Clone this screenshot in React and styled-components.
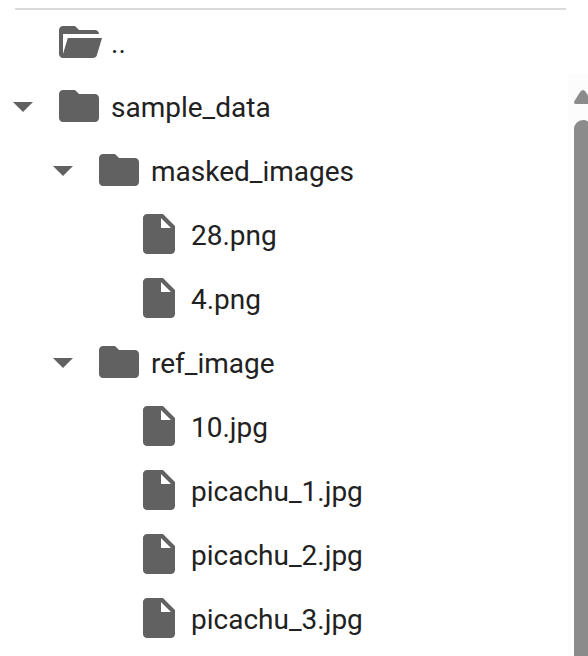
import React from "react";
import styled, { createGlobalStyle } from "styled-components";

const GlobalStyle = createGlobalStyle`
  * { box-sizing: border-box; }
  html, body { margin: 0; background: #fff; overflow: hidden; }
`;

const Browser = styled.main`
  display: grid;
  grid-template-columns: 568px 20px;
  width: 588px;
  height: 656px;
  overflow: hidden;
  background: #fff;
  color: #212121;
  font: 400 28px/64px Roboto, "Liberation Sans", sans-serif;
`;

const Panel = styled.section`
  padding-top: 8px;
  overflow: hidden;
`;

const Divider = styled.div`
  height: 2px;
  margin: 0 2px 0 15px;
  background: #dadada;
`;

const Tree = styled.ul`
  list-style: none;
  margin: 0;
  padding: 0;
`;

const Row = styled.li`
  display: flex;
  align-items: center;
  gap: 8px;
  height: 64px;
  margin-left: ${({ $depth }) => $depth * 40 - 1}px;
  white-space: nowrap;
`;

const Toggle = styled.span`
  display: flex;
  flex: 0 0 48px;
  height: 48px;
`;

const Icon = styled.svg`
  display: block;
  flex: 0 0 48px;
  width: 48px;
  height: 48px;
  fill: #616161;
`;

const Label = styled.span`
  padding-top: 4px;
`;

const ScrollTrack = styled.aside`
  display: flex;
  flex-direction: column;
  gap: 16px;
  margin-top: 74px;
  padding: 16px 0 0 6px;
  overflow: hidden;
  background: #fcfcfc;
`;

const ScrollArrow = styled.svg`
  flex: none;
  width: 18px;
  height: 14px;
  fill: #8b8b8b;
`;

const ScrollThumb = styled.div`
  flex: 1;
  width: 18px;
  border-radius: 9px 9px 0 0;
  background: #8b8b8b;
`;

const icons = {
  open: "M4 20q-.825 0-1.412-.587T2 18V6q0-.825.588-1.412T4 4h6l2 2h8q.825 0 1.413.588T22 8H4v10l2.4-8h17.1l-2.575 8.575q-.2.65-.737 1.038T19 20z",
  folder: "M4 20q-.825 0-1.412-.587T2 18V6q0-.825.588-1.412T4 4h6l2 2h8q.825 0 1.413.588T22 8v10q0 .825-.587 1.413T20 20z",
  file: "M6 22q-.825 0-1.412-.587T4 20V4q0-.825.588-1.412T6 2h8l6 6v12q0 .825-.587 1.413T18 22zm7-13h5l-5-5z",
  arrow: "M7 10l5 5 5-5z",
};

const entries = [
  { name: "..", kind: "open", depth: 0 },
  { name: "sample_data", kind: "folder", depth: 0, expanded: true },
  { name: "masked_images", kind: "folder", depth: 1, expanded: true },
  { name: "28.png", kind: "file", depth: 2 },
  { name: "4.png", kind: "file", depth: 2 },
  { name: "ref_image", kind: "folder", depth: 1, expanded: true },
  { name: "10.jpg", kind: "file", depth: 2 },
  { name: "picachu_1.jpg", kind: "file", depth: 2 },
  { name: "picachu_2.jpg", kind: "file", depth: 2 },
  { name: "picachu_3.jpg", kind: "file", depth: 2 },
];

function Glyph({ kind }) {
  return (
    <Icon viewBox="0 0 24 24" aria-hidden="true">
      <path fillRule="evenodd" d={icons[kind]} />
    </Icon>
  );
}

export default function App() {
  return (
    <Browser>
      <GlobalStyle />
      <Panel>
        <Divider />
        <Tree>
          {entries.map(({ name, kind, depth, expanded }) => (
            <Row key={name} $depth={depth}>
              <Toggle>{expanded && <Glyph kind="arrow" />}</Toggle>
              <Glyph kind={kind} />
              <Label>{name}</Label>
            </Row>
          ))}
        </Tree>
      </Panel>
      <ScrollTrack>
        <ScrollArrow viewBox="0 0 18 14">
          <path d="M6.5 1.6Q9-1.6 11.5 1.6L17.4 10.8Q19 14 16 14H2Q-1 14 .6 10.8Z" />
        </ScrollArrow>
        <ScrollThumb />
      </ScrollTrack>
    </Browser>
  );
}
